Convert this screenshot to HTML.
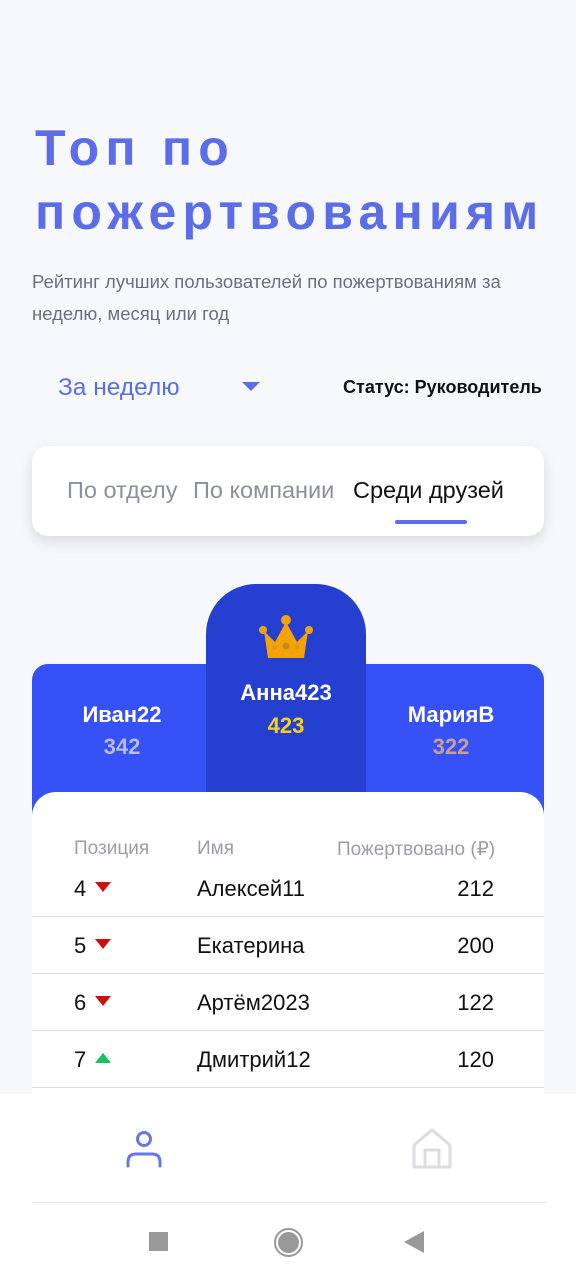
<!DOCTYPE html>
<html><head><meta charset="utf-8"><style>
*{margin:0;padding:0;box-sizing:border-box}
body{width:576px;height:1280px;background:#f7f8fc;font-family:"Liberation Sans",sans-serif;position:relative;overflow:hidden}
.abs{position:absolute}
.title{left:35px;top:116px;font-size:50px;font-weight:bold;color:#5b6ee8;letter-spacing:6.2px;line-height:64px}
.sub{left:32px;top:266px;width:520px;font-size:18.5px;color:#6b7080;line-height:32px}
.tabs{left:32px;top:446px;width:512px;height:90px;background:#fff;border-radius:16px;box-shadow:0 6px 14px rgba(0,0,0,.12)}
.tab{top:477px;font-size:23.5px;color:#8c909c}
.pod{left:32px;top:664px;width:512px;height:150px;background:#3651f5;border-radius:16px 16px 0 0}
.center{left:206px;top:584px;width:160px;height:215px;background:#2540d0;border-radius:50px 50px 0 0}
.nm{font-size:22px;font-weight:bold;color:#fff;text-align:center;width:160px}
.sc{font-size:22px;font-weight:bold;text-align:center;width:160px}
.card{left:32px;top:792px;width:512px;height:400px;background:#fff;border-radius:24px 24px 0 0}
.row{left:32px;width:512px;height:57px;border-bottom:1.5px solid #dcdde2;font-size:22px;color:#111}
.row span{position:absolute;top:16px}
.row svg{position:absolute;left:63px;top:22px}
.nav{left:0;top:1094px;width:576px;height:186px;background:#fff}
</style></head><body>
<div class="abs title">Топ по<br>пожертвованиям</div>
<div class="abs sub">Рейтинг лучших пользователей по пожертвованиям за неделю, месяц или год</div>
<div class="abs" style="left:58px;top:374px;font-size:24.5px;color:#5b6ee8">За неделю</div>
<svg class="abs" style="left:242px;top:382px" width="18" height="10"><path d="M0 0H18L9 9Z" fill="#5b6ee8"/></svg>
<div class="abs" style="left:343px;top:377px;font-size:18px;font-weight:bold;color:#111">Статус: Руководитель</div>
<div class="abs tabs"></div>
<div class="abs tab" style="left:67px">По отделу</div>
<div class="abs tab" style="left:193px">По компании</div>
<div class="abs tab" style="left:353px;color:#111">Среди друзей</div>
<div class="abs" style="left:395px;top:520px;width:72px;height:4px;border-radius:2px;background:#5b6ee8"></div>
<div class="abs pod"></div>
<div class="abs center"></div>
<svg class="abs" style="left:258px;top:614px" width="56" height="46" viewBox="0 0 56 46"><circle cx="28" cy="6" r="5" fill="#f5a20a"/><circle cx="5" cy="16" r="4" fill="#f5a20a"/><circle cx="51" cy="16" r="4" fill="#f5a20a"/><path d="M6 17L17 28L28 8L39 28L50 17L46 44H10Z" fill="#f5a20a"/><circle cx="28" cy="32" r="3.5" fill="#c88a10"/><circle cx="17" cy="33" r="2" fill="#d89a10"/><circle cx="39" cy="33" r="2" fill="#d89a10"/></svg>
<div class="abs nm" style="left:42px;top:702px">Иван22</div>
<div class="abs sc" style="left:42px;top:734px;color:#b8bcd8">342</div>
<div class="abs nm" style="left:206px;top:680px">Анна423</div>
<div class="abs sc" style="left:206px;top:713px;color:#f7d117">423</div>
<div class="abs nm" style="left:371px;top:702px">МарияВ</div>
<div class="abs sc" style="left:371px;top:734px;color:#c8a090">322</div>
<div class="abs card"></div>
<div class="abs" style="left:74px;top:838px;font-size:19px;color:#9a9ea8">Позиция</div>
<div class="abs" style="left:197px;top:838px;font-size:19px;color:#9a9ea8">Имя</div>
<div class="abs" style="left:337px;top:838px;font-size:19px;color:#9a9ea8">Пожертвовано (₽)</div>
<div class="abs row" style="top:860px"><span style="left:42px">4</span><svg width="16" height="12"><path d="M0 0H16L8 10Z" fill="#d01010"/></svg><span style="left:165px">Алексей11</span><span style="right:50px">212</span></div>
<div class="abs row" style="top:917px"><span style="left:42px">5</span><svg width="16" height="12"><path d="M0 0H16L8 10Z" fill="#d01010"/></svg><span style="left:165px">Екатерина</span><span style="right:50px">200</span></div>
<div class="abs row" style="top:974px"><span style="left:42px">6</span><svg width="16" height="12"><path d="M0 0H16L8 10Z" fill="#d01010"/></svg><span style="left:165px">Артём2023</span><span style="right:50px">122</span></div>
<div class="abs row" style="top:1031px"><span style="left:42px">7</span><svg width="16" height="12"><path d="M0 10H16L8 0Z" fill="#18c060"/></svg><span style="left:165px">Дмитрий12</span><span style="right:50px">120</span></div>
<div class="abs nav"></div>
<svg class="abs" style="left:124px;top:1128px" width="40" height="40" viewBox="0 0 40 40"><circle cx="20" cy="11" r="6.5" fill="none" stroke="#6676ea" stroke-width="3"/><path d="M4 38V34Q4 26 12 26H28Q36 26 36 34V38" fill="none" stroke="#6676ea" stroke-width="3" stroke-linecap="round"/></svg>
<svg class="abs" style="left:411px;top:1127px" width="42" height="44" viewBox="0 0 42 44"><path d="M3 18L21 3L39 18V40H3Z" fill="none" stroke="#dcdde2" stroke-width="3" stroke-linejoin="round"/><path d="M14 40V23H28V40" fill="none" stroke="#dcdde2" stroke-width="3"/></svg>
<div class="abs" style="left:32px;top:1202px;width:514px;height:1px;background:#e2e3e6"></div>
<div class="abs" style="left:149px;top:1232px;width:19px;height:19px;background:#999"></div>
<div class="abs" style="left:274px;top:1228px;width:29px;height:29px;border-radius:50%;border:2px solid #999;padding:2px"><div style="width:21px;height:21px;border-radius:50%;background:#999"></div></div>
<svg class="abs" style="left:404px;top:1231px" width="20" height="22"><path d="M20 0V22L0 11Z" fill="#999"/></svg>
</body></html>
